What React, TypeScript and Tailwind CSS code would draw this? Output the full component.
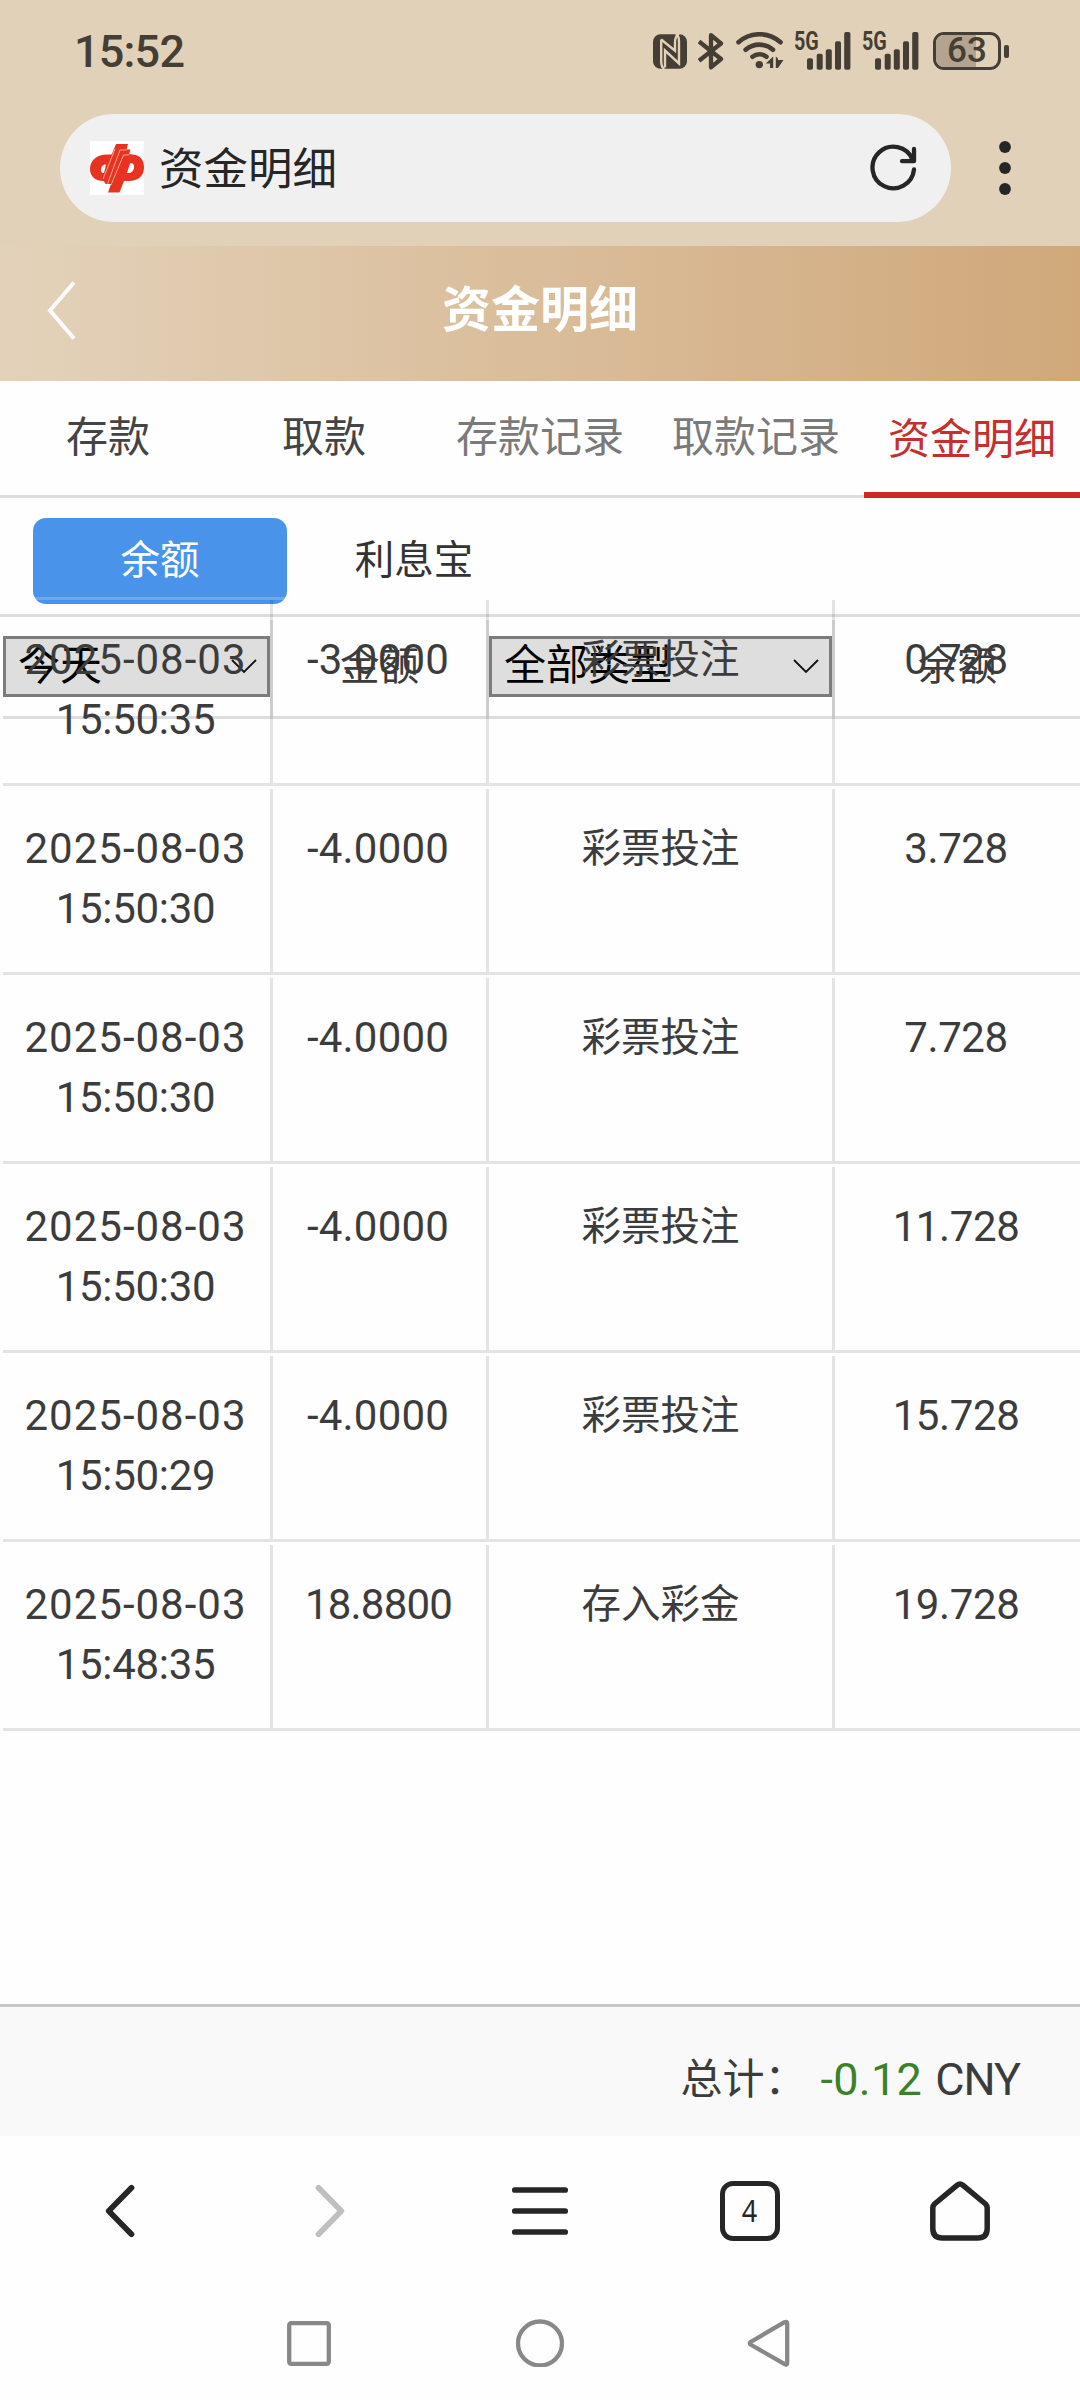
import clsx from "clsx"

interface FundRecord {
  date: string;
  time: string;
  amount: string;
  type: string;
  balance: string;
}

const records: FundRecord[] = [
  { date: "2025-08-03", time: "15:50:35", amount: "-3.0000", type: "彩票投注", balance: "0.728" },
  { date: "2025-08-03", time: "15:50:30", amount: "-4.0000", type: "彩票投注", balance: "3.728" },
  { date: "2025-08-03", time: "15:50:30", amount: "-4.0000", type: "彩票投注", balance: "7.728" },
  { date: "2025-08-03", time: "15:50:30", amount: "-4.0000", type: "彩票投注", balance: "11.728" },
  { date: "2025-08-03", time: "15:50:29", amount: "-4.0000", type: "彩票投注", balance: "15.728" },
  { date: "2025-08-03", time: "15:48:35", amount: "18.8800", type: "存入彩金", balance: "19.728" },
]

const tabs = [
  { label: "存款", className: "text-[#444]" },
  { label: "取款", className: "text-[#444]" },
  { label: "存款记录", className: "text-[#7a7a7a]" },
  { label: "取款记录", className: "text-[#7a7a7a]" },
]

function Signal() {
  return (
    <div className="relative h-[38px] w-[57px]">
      <span className="absolute top-0 left-0 origin-left scale-x-[0.76] text-[26px] leading-[19px] font-bold">5G</span>
      <svg className="absolute inset-0" width="57" height="38" viewBox="0 0 57 38" fill="currentColor">
        <rect x="13" y="26.3" width="6" height="11.5" rx="1.8" />
        <rect x="22.7" y="21.8" width="6" height="16" rx="1.8" />
        <rect x="31.8" y="17.3" width="6" height="20.5" rx="1.8" />
        <rect x="41" y="9.3" width="6" height="28.5" rx="1.8" />
        <rect x="50.2" y="0" width="6.2" height="37.8" rx="1.8" />
      </svg>
    </div>
  )
}

function StatusBar() {
  return (
    <div className="flex h-[114px] items-start justify-between pl-[74px] pr-[71px] text-[#453e35]">
      <span className="mt-[32px] text-[45px] leading-[40px] font-medium tracking-[-0.8px]">15:52</span>
      <div className="mt-[32px] flex items-start">
        <svg width="34" height="38" viewBox="0 0 34 38">
          <rect y="2.3" width="34" height="34.4" rx="7.5" fill="currentColor" />
          <g fill="none" stroke="#e2d1b9" strokeWidth="2.4">
            <path d="M8.2 7.5V29.5Q8.2 35 11.3 37" />
            <path d="M8.2 7.5L22 18.8V10.5Q22 4 26 1.8" />
            <path d="M12 35.5V18.5L26 31.5V9Q26 4 23 2" />
          </g>
        </svg>
        <svg className="ml-[11px]" width="27" height="38" viewBox="0 0 27 38" fill="none" stroke="currentColor" strokeWidth="4.3" strokeLinejoin="round">
          <path d="M1 9.5L23 27L13 35.3V3.2L23 11.5L1 28.8" />
        </svg>
        <svg className="ml-[11px]" width="48" height="38" viewBox="0 0 48 38" fill="none" stroke="currentColor" strokeWidth="4.6" strokeLinecap="round">
          <path d="M2.5 10.2C14.5 -0.4 32.5 -0.4 44.5 10.2" />
          <path d="M9.6 17.8C17.5 10.9 29.5 10.9 37 17.8" />
          <path d="M16.5 24.8C20.5 21.4 26.5 21.4 30.5 24.8" />
          <circle cx="23.3" cy="32.6" r="3.7" fill="currentColor" stroke="none" />
          <path d="M37.2 24.5V36H34V31.5H29.8ZM39.8 24.5L42 26.5V28L47.5 28L42 36H39.8Z" fill="currentColor" stroke="none" />
        </svg>
        <div className="ml-[10px]"><Signal /></div>
        <div className="ml-[11px]"><Signal /></div>
        <div className="ml-[14px] flex items-center">
          <div className="relative flex h-[38px] w-[68px] items-center justify-center overflow-hidden rounded-[11px] border-[3.5px] border-[#453e35]">
            <div className="absolute inset-y-0 left-0 w-[40px] bg-[#b3a38f]" />
            <span className="relative text-[35px] leading-[30px] font-medium">63</span>
          </div>
          <div className="ml-[3px] h-[13px] w-[5px] rounded-[2px] bg-[#453e35]" />
        </div>
      </div>
    </div>
  )
}

function AddressBar() {
  return (
    <div className="flex h-[132px] items-start pl-[60px]">
      <div className="flex h-[108px] w-[891px] items-center rounded-full bg-[#f0f0f0] pl-[30px] pr-[32px]">
        <svg width="54" height="54" viewBox="0 0 54 54">
          <rect width="54" height="54" fill="#fff" />
          <path d="M24 13.5H17C7 13.5 0 19 0 28C0 35.5 5 40 14 40H18L24 24Z" fill="#e93322" />
          <path d="M28 13.5H42C50 13.5 54 19 54 26.5C54 35 48 40 39 40H34L29.5 51.5H18L21 43H15L18 37H12Z" fill="#e93322" />
          <path d="M26 3H38L36.5 8.5H40.5L39 13.5H42L30 40L15 42L12 37Z" fill="#e93322" />
          <path d="M16 23.5C12.5 23.5 10.5 26 11 30C11.3 31.8 12.8 32.3 14 32Z" fill="#fff" />
          <path d="M40 22.5C43 21.8 44.5 23.5 44 27C43.4 30.5 41 32.5 37 32Z" fill="#fff" />
          <path d="M25 8L13 38M36.5 9H30L17.5 43M39 14H33.5L21 44" fill="none" stroke="#f7a58f" strokeWidth="1" />
        </svg>
        <span className="mt-[3px] ml-[15px] text-[44.5px] leading-[60px] text-[#262626]">资金明细</span>
        <svg className="ml-auto" width="50" height="50" viewBox="0 0 50 50" fill="none" stroke="#262626" strokeWidth="4.3" strokeLinecap="round" strokeLinejoin="round">
          <path d="M45 26.5A20.8 20.8 0 1 1 43.5 16.5" />
          <path d="M45 6V18.2H33" />
        </svg>
      </div>
      <svg className="mt-[27px] ml-[44px]" width="20" height="54" viewBox="0 0 20 54" fill="#262626">
        <circle cx="10" cy="6" r="5.9" />
        <circle cx="10" cy="27" r="5.9" />
        <circle cx="10" cy="48" r="5.9" />
      </svg>
    </div>
  )
}

function FilterSelect({ label }: { label: string }) {
  return (
    <button className="flex h-[61px] w-full items-center justify-between border-[3px] border-[#7c7c7c] bg-[#dedede] pl-[12px] pr-[10px] text-[42px] leading-[50px] text-black">
      <span className="-mt-[2px]">{label}</span>
      <svg width="26" height="16" viewBox="0 0 26 16" fill="none" stroke="#111" strokeWidth="1.8">
        <path d="M1 1L13 13L25 1" />
      </svg>
    </button>
  )
}

function RecordRow({ record }: { record: FundRecord }) {
  const cell = "border-r-[3px] border-black/10 pt-[30px]"
  return (
    <div className="mb-[3px] grid h-[186px] grid-cols-[270px_216px_346px_245px] border-b-[3px] border-black/10 text-center text-[42px] leading-[60px]">
      <div className={cell}>
        <p className="-ml-[2px] tracking-[1px]">{record.date}</p>
        <p className="-ml-[2px] tracking-[-0.3px]">{record.time}</p>
      </div>
      <div className={clsx(cell, record.amount.startsWith("-") ? "pr-[3px] tracking-[0.2px]" : "pr-[2px] tracking-[-0.8px]")}>{record.amount}</div>
      <div className={clsx(cell, "text-[39.5px]")}>{record.type}</div>
      <div className="pt-[30px] pr-[3px] tracking-[-0.4px]">{record.balance}</div>
    </div>
  )
}

export default function App() {
  return (
    <div className="flex h-[2400px] w-[1080px] flex-col overflow-hidden bg-[#fefefe] font-['Roboto','Noto_Sans_CJK_SC',sans-serif] text-[#3c3c3c]">
      <div className="bg-[#e2d1b9]">
        <StatusBar />
        <AddressBar />
      </div>

      <header className="grid h-[135px] grid-cols-[120px_1fr_120px] items-center bg-linear-to-r from-[#e3d2ba] to-[#d0a87a] pb-[5px]">
        <svg className="ml-[45px]" width="32" height="60" viewBox="0 0 32 60" fill="none" stroke="#fff" strokeWidth="4">
          <path d="M29 1.5L5 29.5L29 57.5" />
        </svg>
        <h1 className="text-center text-[49px] leading-[60px] font-bold text-white">资金明细</h1>
      </header>

      <nav className="flex h-[117px] text-[42px] leading-[60px]">
        {tabs.map((tab) => (
          <div key={tab.label} className={clsx("w-[216px] border-b-[3px] border-[#ddd] pt-[27px] text-center", tab.className)}>
            {tab.label}
          </div>
        ))}
        <div className="w-[216px] border-b-[6px] border-[#cb2a24] pt-[29px] text-center text-[#c5302b]">资金明细</div>
      </nav>

      <div className="flex h-[119px] border-b-[3px] border-black/13 pt-[20px] pl-[33px] text-center text-[39.5px] leading-[86px]">
        <div className="relative h-[86px] w-[254px] overflow-hidden rounded-[13px] bg-[#4993ea] text-white">
          余额
          <div className="absolute bottom-[4px] left-0 h-[3px] w-full bg-white/20" />
        </div>
        <div className="w-[254px] text-[#333]">利息宝</div>
      </div>

      <div className="mt-[3px] ml-[3px] grid h-[99px] shrink-0 grid-cols-[270px_216px_346px_245px] border-b-[3px] border-black/13 text-center text-[39.5px] leading-[94px]">
        <div className="border-r-[3px] border-black/10 pt-[16px]"><FilterSelect label="今天" /></div>
        <div className="border-r-[3px] border-black/10">金额</div>
        <div className="border-r-[3px] border-black/10 pt-[16px]"><FilterSelect label="全部类型" /></div>
        <div>余额</div>
      </div>

      {/* scrolled list slides under the filter row */}
      <div className="relative -mt-[119px] ml-[3px] h-[1404px] shrink-0">
        {records.map((record, i) => (
          <RecordRow key={i} record={record} />
        ))}
      </div>

      <div className="flex h-[132px] shrink-0 items-center justify-end border-t-[3px] border-[#cac6c7] bg-[#f9f9f9] pr-[60px] pt-[16px] text-[45px] leading-[60px]">
        <span className="text-[42px]">总计：</span>
        <span className="ml-[14px] text-[#3a8229] tracking-[0.3px]">-0.12</span>
        <span className="ml-[13px] tracking-[-1px]">CNY</span>
      </div>

      <div className="grid h-[150px] shrink-0 grid-cols-5 place-items-center px-[15px] text-[#262626]">
        <svg width="60" height="60" viewBox="0 0 60 60" fill="none" stroke="currentColor" strokeWidth="5.7" strokeLinecap="round" strokeLinejoin="round">
          <path d="M41.5 6.7L18.7 30L41.5 53.3" />
        </svg>
        <svg width="60" height="60" viewBox="0 0 60 60" fill="none" stroke="#bfbfbf" strokeWidth="5.7" strokeLinecap="round" strokeLinejoin="round">
          <path d="M18.5 6.7L41.3 30L18.5 53.3" />
        </svg>
        <svg width="60" height="60" viewBox="0 0 60 60" stroke="currentColor" strokeWidth="5.7" strokeLinecap="round">
          <path d="M4.8 9H55.2M4.8 30H55.2M4.8 51H55.2" />
        </svg>
        <div className="flex h-[60px] w-[60px] items-center justify-center rounded-[13px] border-[5.5px] border-[#262626] font-['Noto_Sans',sans-serif] text-[30px] leading-[30px]">
          <span className="scale-x-90">4</span>
        </div>
        <svg width="60" height="60" viewBox="0 0 60 60" fill="none" stroke="currentColor" strokeWidth="5.5" strokeLinejoin="round">
          <path d="M27.2 4.2Q30 1.8 32.8 4.2L55.5 23Q57.2 24.6 57.2 27V47.5Q57.2 57 47.5 57H12.5Q2.8 57 2.8 47.5V27Q2.8 24.6 4.5 23Z" />
        </svg>
      </div>

      <div className="flex h-[114px] shrink-0 items-center justify-center gap-[182px] text-[#888]">
        <svg width="48" height="48" viewBox="0 0 48 48" fill="none" stroke="currentColor" strokeWidth="4.3">
          <rect x="3.2" y="4.2" width="39.6" height="40.6" rx="2" />
        </svg>
        <svg width="48" height="48" viewBox="0 0 48 48" fill="none" stroke="currentColor" strokeWidth="4.3">
          <circle cx="24" cy="24.5" r="22" />
        </svg>
        <svg width="48" height="48" viewBox="0 0 48 48" fill="none" stroke="currentColor" strokeWidth="4.3" strokeLinejoin="round">
          <path d="M38.5 3.2Q41.2 2 41.2 4.5V44Q41.2 46.5 38.7 45.2L4.5 25.5Q3 24.3 4.5 23Z" />
        </svg>
      </div>
    </div>
  )
}
